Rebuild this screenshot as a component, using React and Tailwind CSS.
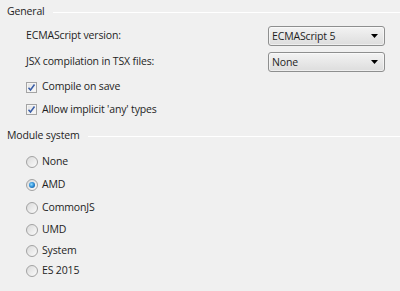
import React, { useState } from 'react';

function Header({ title }) {
  return (
    <div className="flex items-center h-[22px] pl-[7px]">
      <span>{title}</span>
      <div className="flex-1 ml-[8px] h-px bg-[#c8c8c8] border-b border-white" />
    </div>
  );
}

function Combo({ value }) {
  return (
    <div className="w-[117px] h-[20px] rounded-[3px] border border-[#8e8f8f] bg-gradient-to-b from-[#f3f3f3] to-[#dddddd] flex items-center px-[3px] shadow-[inset_0_0_0_1px_#ffffff80]">
      <span className="flex-1 leading-none">{value}</span>
      <svg width="7" height="4" viewBox="0 0 7 4" className="mr-[3px]">
        <path d="M0 0H7L3.5 4Z" fill="#000" />
      </svg>
    </div>
  );
}

function Check({ label, checked }) {
  return (
    <div className="flex items-center pl-[26px]">
      <div className="w-[11px] h-[11px] border border-[#a4a4a4] bg-gradient-to-br from-[#e2e2e2] to-[#fafafa] flex items-center justify-center shadow-[inset_0_0_0_1px_#f4f4f4]">
        {checked && (
          <svg width="9" height="9" viewBox="0 0 9 9">
            <path d="M1.5 4.8L3.5 7L7.5 1.5" stroke="#3a5ea8" strokeWidth="1.5" fill="none" />
          </svg>
        )}
      </div>
      <span className="ml-[5px]">{label}</span>
    </div>
  );
}

function Radio({ label, checked, onClick }) {
  return (
    <div className="flex items-center pl-[26px] cursor-default" onClick={onClick}>
      <div className="w-[12px] h-[12px] rounded-full border border-[#a2a2a2] bg-gradient-to-br from-[#dadada] to-[#fbfbfb] flex items-center justify-center">
        {checked && <div className="w-[6px] h-[6px] rounded-full bg-[radial-gradient(circle_at_40%_40%,#8fdcff_0%,#2a8ad4_50%,#124a82_100%)]" />}
      </div>
      <span className="ml-[4px]">{label}</span>
    </div>
  );
}

export default function App() {
  const [mod, setMod] = useState('AMD');
  const modules = ['None', 'AMD', 'CommonJS', 'UMD', 'System', 'ES 2015'];
  const heights = ['h-[22px]', 'h-[23px]', 'h-[23px]', 'h-[21px]', 'h-[21px]', 'h-[20px]'];

  return (
    <div className="w-[400px] h-[291px] bg-[#f0f0f0] text-[#1e1e1e] text-[10.5px] tracking-[-0.15px] overflow-hidden" style={{ fontFamily: '"Open Sans", "Noto Sans", sans-serif' }}>
      <div className="pt-[1px]"><Header title="General" /></div>
      <div className="flex items-center h-[26px] pl-[26px] pr-[15px]">
        <span className="flex-1">ECMAScript version:</span>
        <Combo value="ECMAScript 5" />
      </div>
      <div className="flex items-center h-[26px] pl-[26px] pr-[15px]">
        <span className="flex-1">JSX compilation in TSX files:</span>
        <Combo value="None" />
      </div>
      <div className="h-[24px] flex items-center"><Check label="Compile on save" checked /></div>
      <div className="h-[21px] flex items-center"><Check label="Allow implicit 'any' types" checked /></div>
      <div className="mt-[5px]"><Header title="Module system" /></div>
      <div className="mt-[4px] flex flex-col">
        {modules.map((m, i) => (
          <div key={m} className={`${heights[i]} flex items-center`}>
            <Radio label={m} checked={mod === m} onClick={() => setMod(m)} />
          </div>
        ))}
      </div>
    </div>
  );
}
